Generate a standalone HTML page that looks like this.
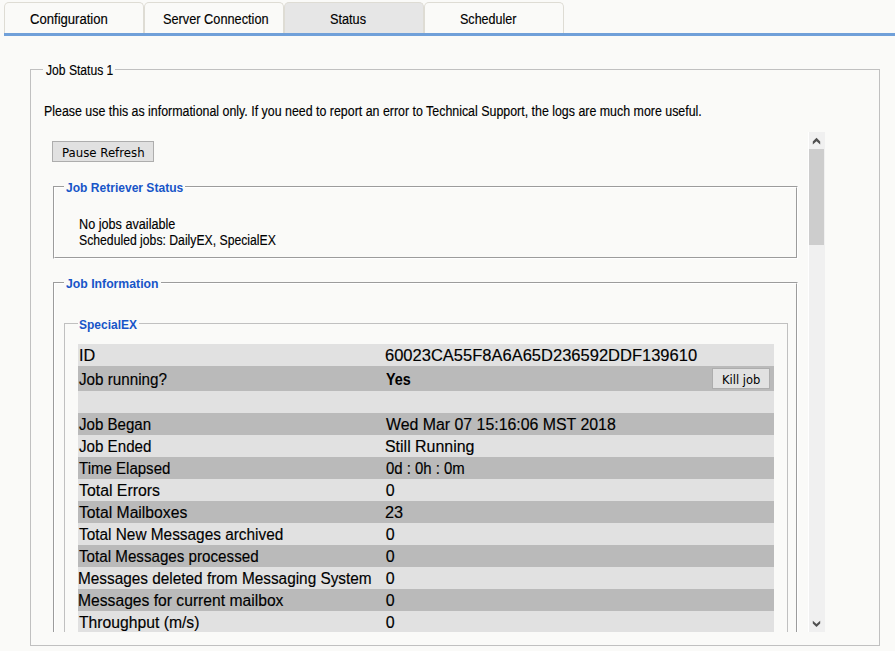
<!DOCTYPE html>
<html>
<head>
<meta charset="utf-8">
<title>Job Status</title>
<style>
html,body{margin:0;padding:0;}
body{width:895px;height:651px;overflow:hidden;background:#fafaf8;font-family:"Liberation Sans",sans-serif;font-size:14px;color:#1b1b1b;position:relative;}
.abs{position:absolute;}
#clip{position:absolute;left:0;top:0;width:895px;height:632px;overflow:hidden;}
.tab{position:absolute;top:2px;height:31px;width:140px;box-sizing:border-box;border:1px solid #dedcd4;border-bottom:none;border-radius:5px 5px 0 0;background:#fafaf8;}
.tab.active{background:#e6e6e6;}
#blue{position:absolute;left:4px;top:33px;width:891px;height:3px;background:#70a0d9;}
.fs{position:absolute;box-sizing:border-box;border:1px solid #c0c0c0;}
.gr{position:absolute;box-sizing:border-box;border:1px solid;border-color:#9c9c9c #fff #fff #9c9c9c;}
.gr i{position:absolute;left:0;top:0;right:0;bottom:0;border:1px solid;border-color:#fff #9c9c9c #9c9c9c #fff;}
.gap{position:absolute;background:#fafaf8;height:4px;}
.btn{position:absolute;box-sizing:border-box;border:1px solid #adadad;background:#e1e1e1;}
.row{position:absolute;left:78px;width:696px;height:22px;}
.l{background:#e1e1e1;}
.d{background:#bababa;}
.t{position:absolute;display:inline-block;line-height:20px;white-space:nowrap;transform-origin:0 50%;color:#000;-webkit-text-stroke:0.15px;}
</style>
</head>
<body>
<div class="tab" style="left:4px"></div>
<div class="tab" style="left:144px"></div>
<div class="tab active" style="left:284px"></div>
<div class="tab" style="left:424px"></div>
<div id="blue"></div>

<div class="fs" style="left:30px;top:69px;width:850px;height:577px"></div>
<div class="gap" style="left:43px;top:67px;width:72px"></div>
<div id="clip">

<div class="btn" style="left:52px;top:141px;width:102px;height:21px"></div>

<div class="gr" style="left:53px;top:186px;width:745px;height:73px"><i></i></div>
<div class="gap" style="left:64px;top:184px;width:121px"></div>

<div class="gr" style="left:53px;top:282px;width:745px;height:380px"><i></i></div>
<div class="gap" style="left:64px;top:280px;width:97px"></div>

<div class="fs" style="left:64px;top:323px;width:724px;height:340px"></div>
<div class="gap" style="left:78px;top:321px;width:61px"></div>

<div class="row l" style="top:344px"></div>
<div class="row d" style="top:366px;height:25px"></div>
<div class="btn" style="left:712px;top:368px;width:58px;height:21px"></div>
<div class="row l" style="top:391px"></div>
<div class="row d" style="top:413px"></div>
<div class="row l" style="top:435px"></div>
<div class="row d" style="top:457px"></div>
<div class="row l" style="top:479px"></div>
<div class="row d" style="top:501px"></div>
<div class="row l" style="top:523px"></div>
<div class="row d" style="top:545px"></div>
<div class="row l" style="top:567px"></div>
<div class="row d" style="top:589px"></div>
<div class="row l" style="top:611px"></div>

<span class="t" style="left:30.20px;top:9px;font-size:14px;transform:scaleX(0.9342)">Configuration</span>
<span class="t" style="left:163.00px;top:9px;font-size:14px;transform:scaleX(0.9106)">Server Connection</span>
<span class="t" style="left:330.40px;top:9px;font-size:14px;transform:scaleX(0.9077)">Status</span>
<span class="t" style="left:460.20px;top:9px;font-size:14px;transform:scaleX(0.8952)">Scheduler</span>
<span class="t" style="left:45.70px;top:60px;font-size:14px;transform:scaleX(0.8650)">Job Status 1</span>
<span class="t" style="left:44.30px;top:101px;font-size:14px;transform:scaleX(0.8857)">Please use this as informational only. If you need to report an error to Technical Support, the logs are much more useful.</span>
<span class="t" style="left:62.20px;top:143px;font-size:12px;font-family:'DejaVu Sans','Liberation Sans',sans-serif;-webkit-text-stroke:0;transform:scaleX(0.9783)">Pause Refresh</span>
<span class="t" style="left:66.00px;top:177.5px;font-size:13px;font-weight:bold;-webkit-text-stroke:0;color:#1755c8;transform:scaleX(0.9270)">Job Retriever Status</span>
<span class="t" style="left:79.00px;top:214px;font-size:14px;transform:scaleX(0.9038)">No jobs available</span>
<span class="t" style="left:79.30px;top:230px;font-size:14px;transform:scaleX(0.8723)">Scheduled jobs: DailyEX, SpecialEX</span>
<span class="t" style="left:66.00px;top:273.5px;font-size:13px;font-weight:bold;-webkit-text-stroke:0;color:#1755c8;transform:scaleX(0.9418)">Job Information</span>
<span class="t" style="left:79.00px;top:314.5px;font-size:13px;font-weight:bold;-webkit-text-stroke:0;color:#1755c8;transform:scaleX(0.9226)">SpecialEX</span>
<span class="t" style="left:78.70px;top:346px;font-size:16px;transform:scaleX(1.0133)">ID</span>
<span class="t" style="left:78.80px;top:415px;font-size:16px;transform:scaleX(0.9421)">Job Began</span>
<span class="t" style="left:78.80px;top:437px;font-size:16px;transform:scaleX(0.9461)">Job Ended</span>
<span class="t" style="left:79.40px;top:459px;font-size:16px;transform:scaleX(0.9397)">Time Elapsed</span>
<span class="t" style="left:79.40px;top:481px;font-size:16px;transform:scaleX(0.9902)">Total Errors</span>
<span class="t" style="left:79.40px;top:503px;font-size:16px;transform:scaleX(0.9818)">Total Mailboxes</span>
<span class="t" style="left:79.40px;top:525px;font-size:16px;transform:scaleX(0.9613)">Total New Messages archived</span>
<span class="t" style="left:79.40px;top:547px;font-size:16px;transform:scaleX(0.9481)">Total Messages processed</span>
<span class="t" style="left:78.40px;top:569px;font-size:16px;transform:scaleX(0.9599)">Messages deleted from Messaging System</span>
<span class="t" style="left:78.40px;top:591px;font-size:16px;transform:scaleX(0.9789)">Messages for current mailbox</span>
<span class="t" style="left:79.40px;top:613px;font-size:16px;transform:scaleX(0.9811)">Throughput (m/s)</span>
<span class="t" style="left:78.80px;top:370px;font-size:16px;transform:scaleX(0.9501)">Job running?</span>
<span class="t" style="left:384.80px;top:346px;font-size:16px;transform:scaleX(1.0319)">60023CA55F8A6A65D236592DDF139610</span>
<span class="t" style="left:385.80px;top:415px;font-size:16px;transform:scaleX(0.9922)">Wed Mar 07 15:16:06 MST 2018</span>
<span class="t" style="left:384.70px;top:437px;font-size:16px;transform:scaleX(0.9955)">Still Running</span>
<span class="t" style="left:385.70px;top:459px;font-size:16px;transform:scaleX(0.9321)">0d : 0h : 0m</span>
<span class="t" style="left:385.70px;top:481px;font-size:16px;transform:scaleX(1.0000)">0</span>
<span class="t" style="left:384.90px;top:503px;font-size:16px;transform:scaleX(1.0176)">23</span>
<span class="t" style="left:385.70px;top:525px;font-size:16px;transform:scaleX(1.0000)">0</span>
<span class="t" style="left:385.70px;top:547px;font-size:16px;transform:scaleX(1.0000)">0</span>
<span class="t" style="left:385.70px;top:569px;font-size:16px;transform:scaleX(1.0000)">0</span>
<span class="t" style="left:385.70px;top:591px;font-size:16px;transform:scaleX(1.0000)">0</span>
<span class="t" style="left:385.70px;top:613px;font-size:16px;transform:scaleX(1.0000)">0</span>
<span class="t" style="left:385.80px;top:370px;font-size:16px;font-weight:bold;-webkit-text-stroke:0;transform:scaleX(0.8963)">Yes</span>
<span class="t" style="left:721.50px;top:370px;font-size:12px;font-family:'DejaVu Sans','Liberation Sans',sans-serif;-webkit-text-stroke:0;transform:scaleX(0.9583)">Kill job</span>
</div>
<!-- scrollbar -->
<div class="abs" style="left:808px;top:132px;width:1px;height:500px;background:#fff"></div>
<div class="abs" style="left:809px;top:132px;width:16px;height:500px;background:#f0f0f0"></div>
<div class="abs" style="left:809px;top:149px;width:15px;height:96px;background:#cdcdcd"></div>
<svg class="abs" style="left:809px;top:132px" width="16" height="17" viewBox="0 0 16 17"><path d="M3.8 9.5 L7.5 5.8 L11.2 9.5 L11.2 12.4 L7.5 9.2 L3.8 12.4 Z" fill="#505050"/></svg>
<svg class="abs" style="left:809px;top:615px" width="16" height="17" viewBox="0 0 16 17"><path d="M3.8 5.8 L7.5 9 L11.2 5.8 L11.2 8.5 L7.5 12 L3.8 8.5 Z" fill="#505050"/></svg>
</body>
</html>
